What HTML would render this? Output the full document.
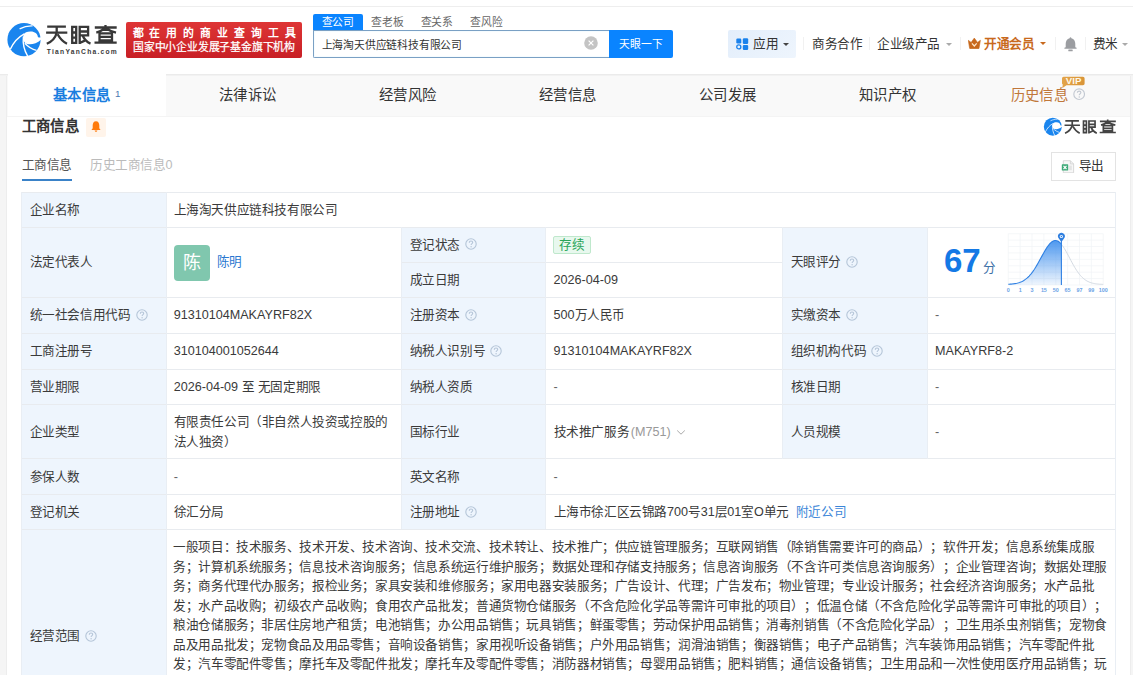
<!DOCTYPE html>
<html lang="zh-CN"><head><meta charset="utf-8"><style>
html,body{margin:0;padding:0;width:1133px;height:675px;overflow:hidden;background:#fff;font-family:'Liberation Sans', sans-serif;}
.a{position:absolute;white-space:nowrap;text-spacing-trim:space-all;}
</style></head><body>
<div class="a" style="left:0px;top:0px;width:1133px;height:73px;background:#fff;"></div><div class="a" style="left:0px;top:6px;width:1133px;height:1px;background:#eeeeee;"></div><svg class="a" style="left:4px;top:20px" width="40" height="40" viewBox="0 0 40 40"><circle cx="20" cy="19.7" r="16.6" fill="#1a85ee"/>
<path d="M33.9 17 C 33.6 13.6, 30.8 11.6, 26.8 11.5 C 23.2 11.4, 20.6 12.6, 19.6 14.5 C 18.8 17.5, 19.3 21, 21 23 C 24 25, 31.5 25, 37.2 19.4 L 37.6 17.6 C 36.2 17.3, 34.8 17.8, 33.9 17 Z" fill="#fff"/>
<path d="M15.6 8.9 C 19.5 6.9, 24.5 5.8, 28.6 6.0" fill="none" stroke="#fff" stroke-width="1.2"/>
<path d="M6.3 29.2 C 9.5 22.5, 14.5 17, 20.3 13.9" fill="none" stroke="#fff" stroke-width="1.4"/>
<path d="M19.4 16.5 C 18.6 23.5, 20.5 31, 23.9 36.6" fill="none" stroke="#fff" stroke-width="1.4"/>
<path d="M20.8 23.3 C 24 26.8, 28.5 29.5, 32.5 30.3" fill="none" stroke="#fff" stroke-width="1.3"/></svg><svg class="a" style="left:44px;top:20px" width="80" height="38" viewBox="0 0 80 38"><g fill="none" stroke="#383838" stroke-width="2.3">
<path d="M3.2 6.7 H21.9 M2.1 12.7 H23.3 M12.7 6.7 V12.7 M12.7 12.7 C 11.5 17.5, 8 21.5, 2.8 23.7 M13.6 14.2 C 16 18.5, 19.5 22, 23 23.7"/>
<path d="M28.2 6.9 H32.2 V22.8 H28.2 Z M28.2 12.5 H32.2 M28.2 17.6 H32.2"/>
<path d="M35.7 5.8 V23.9 M35.7 6.9 H44.1 V15.3 H35.7 M35.7 11.5 H44.1 M38.5 15.3 C 40 19, 42.5 22, 46.5 23.6 M35.7 23.0 L 40.8 20.6"/>
<path d="M50.8 7.5 H72.7 M61.5 4.9 V11 M61.2 8.3 C 58.5 10.2, 55.5 11.7, 52.3 12.6 M61.8 8.3 C 64.5 10.2, 68 11.7, 72 12.6 M55.5 13.3 H68 V20.4 H55.5 Z M55.5 16.9 H68 M50.5 22.7 H72.7"/>
</g>
<text x="2.8" y="33.9" font-family="Liberation Sans" font-weight="bold" font-size="6.7" fill="#3a3a3a" textLength="70" lengthAdjust="spacing">TianYanCha.com</text></svg><div class="a" style="left:126px;top:22px;width:176px;height:35.5px;background:linear-gradient(#de3535,#c81f25);border-radius:2px;"></div><div class="a" style="left:132.5px;top:24px;font-size:10.8px;line-height:18px;color:#fff;font-weight:bold;"><span style="letter-spacing:5.95px">都在用的商业查询工具</span></div><div class="a" style="left:133px;top:38.2px;font-size:10.8px;line-height:18px;color:#fff;-webkit-text-stroke:0.25px #fff;"><span style="letter-spacing:-0.20px">国家中小企业发展子基金旗下机构</span></div><div class="a" style="left:313px;top:14px;width:49.5px;height:16.5px;background:#0a84ff;border-radius:2px 2px 0 0;"></div><div class="a" style="left:313px;top:14px;font-size:10.8px;line-height:16px;color:#fff;width:49.5px;text-align:center;"><span style="letter-spacing:-0.20px">查公司</span></div><div class="a" style="left:371px;top:14px;font-size:10.8px;line-height:16px;color:#666;"><span style="letter-spacing:-0.20px">查老板</span></div><div class="a" style="left:420.5px;top:14px;font-size:10.8px;line-height:16px;color:#666;"><span style="letter-spacing:-0.20px">查关系</span></div><div class="a" style="left:470px;top:14px;font-size:10.8px;line-height:16px;color:#666;"><span style="letter-spacing:-0.20px">查风险</span></div><div class="a" style="left:313px;top:30px;width:296px;height:26px;border:1px solid #7aa0c4;border-right:none;background:#fff;border-radius:0 0 0 2px;box-shadow:inset 0 0 1.5px #cdeeff"></div><div class="a" style="left:321.5px;top:35.5px;font-size:10.8px;line-height:18px;color:#333;"><span style="letter-spacing:-0.20px">上海淘天供应链科技有限公司</span></div><svg class="a" style="left:584px;top:36px" width="14" height="14" viewBox="0 0 14 14"><circle cx="7" cy="7" r="6.8" fill="#c4c4c4"/><path d="M4.6 4.6 L9.4 9.4 M9.4 4.6 L4.6 9.4" stroke="#fff" stroke-width="1.2"/></svg><div class="a" style="left:608.5px;top:30px;width:64.5px;height:27.5px;background:#0a84ff;border-radius:0 2px 2px 0;"></div><div class="a" style="left:608.5px;top:34.5px;font-size:10.8px;line-height:18px;color:#fff;width:64.5px;text-align:center;"><span style="letter-spacing:-0.20px">天眼一下</span></div><div class="a" style="left:728px;top:30px;width:67.5px;height:27.5px;background:linear-gradient(135deg,#e3eefb,#eef5fd);border-radius:2px;"></div><svg class="a" style="left:736px;top:38px" width="13" height="12.5" viewBox="0 0 13 12.5">
<rect x="0.3" y="0.5" width="5" height="5" rx="1.2" fill="#1a82ec"/><rect x="6.8" y="0.3" width="5.4" height="5.6" rx="1.2" fill="#1a82ec"/>
<circle cx="2.8" cy="8.9" r="2.05" fill="none" stroke="#1a82ec" stroke-width="1.3"/><rect x="6.8" y="6.9" width="5.4" height="5" rx="1.2" fill="#1a82ec"/></svg><div class="a" style="left:753px;top:35px;font-size:12.6px;line-height:18px;color:#333;"><span style="letter-spacing:-0.40px">应用</span></div><div class="a" style="left:782.5px;top:42.5px;width:0;height:0;border-left:3px solid transparent;border-right:3px solid transparent;border-top:3.5px solid #444"></div><div class="a" style="left:803px;top:37px;width:1px;height:13px;background:#f1f1f1;"></div><div class="a" style="left:812px;top:35px;font-size:12.6px;line-height:18px;color:#333;"><span style="letter-spacing:-0.40px">商务合作</span></div><div class="a" style="left:869px;top:37px;width:1px;height:13px;background:#f1f1f1;"></div><div class="a" style="left:877px;top:35px;font-size:12.6px;line-height:18px;color:#333;"><span style="letter-spacing:-0.40px">企业级产品</span></div><div class="a" style="left:945.5px;top:42.5px;width:0;height:0;border-left:3px solid transparent;border-right:3px solid transparent;border-top:3.5px solid #aaa"></div><div class="a" style="left:960px;top:37px;width:1px;height:13px;background:#f1f1f1;"></div><svg class="a" style="left:968px;top:38px" width="13" height="11" viewBox="0 0 13 11">
<path d="M0.3 2.3 L3.1 4.4 L6.3 0.1 L9.5 4.4 L12.4 2.3 L11 10.3 Q10.8 10.8 10.2 10.8 L2.4 10.8 Q1.8 10.8 1.6 10.3 Z" fill="#c8691d" stroke="#c8691d" stroke-width="0.6" stroke-linejoin="round"/><path d="M3.9 5.4 L6.3 8.0 L8.7 5.4" fill="none" stroke="#ffe9cc" stroke-width="1.2"/></svg><div class="a" style="left:984.3px;top:35px;font-size:12.6px;line-height:18px;color:#c8691d;font-weight:bold;"><span style="letter-spacing:-0.40px">开通会员</span></div><div class="a" style="left:1040px;top:42px;width:0;height:0;border-left:3px solid transparent;border-right:3px solid transparent;border-top:3.5px solid #c8691d"></div><div class="a" style="left:1055px;top:37px;width:1px;height:13px;background:#f1f1f1;"></div><svg class="a" style="left:1063.5px;top:36.5px" width="13" height="15" viewBox="0 0 13 15">
<path d="M6.5 0.3 C 7 0.3 7.3 0.8 7.4 1.2 C 10 1.8 11.3 4.2 11.3 6.8 L11.3 10.2 L12.6 10.8 L12.6 11.8 L0.4 11.8 L0.4 10.8 L1.7 10.2 L1.7 6.8 C 1.7 4.2 3 1.8 5.6 1.2 C 5.7 0.8 6 0.3 6.5 0.3 Z" fill="#9b9da1"/>
<rect x="4.3" y="12.4" width="4.4" height="1.9" rx="0.5" fill="#9b9da1"/></svg><div class="a" style="left:1084.5px;top:37px;width:1.0px;height:13px;background:#f1f1f1;"></div><div class="a" style="left:1092.5px;top:35px;font-size:12.6px;line-height:18px;color:#333;"><span style="letter-spacing:-0.40px">费米</span></div><div class="a" style="left:1121.5px;top:42.5px;width:0;height:0;border-left:3px solid transparent;border-right:3px solid transparent;border-top:3.5px solid #aaa"></div><div class="a" style="left:0px;top:74px;width:1133px;height:601px;background:#f5f5f5;"></div><div class="a" style="left:6px;top:74px;width:1125px;height:601px;background:#ededed;"></div><div class="a" style="left:7px;top:74px;width:1123px;height:601px;background:#fff;"></div><div class="a" style="left:7px;top:74px;width:1123px;height:42px;background:#f9f9f9;"></div><div class="a" style="left:7px;top:115.5px;width:1123px;height:1.0px;background:#f4f4f4;"></div><div class="a" style="left:0px;top:73.5px;width:1133px;height:1.0px;background:#ebebeb;"></div><div class="a" style="left:0px;top:74.5px;width:1133px;height:1.0px;background:#f2f2f2;"></div><div class="a" style="left:8px;top:74px;width:158px;height:42px;background:#fff;"></div><div class="a" style="left:53px;top:84.5px;font-size:14.4px;line-height:20px;color:#1a7ee0;font-weight:bold;"><span style="letter-spacing:0.40px">基本信息</span></div><div class="a" style="left:115px;top:83.5px;font-size:9.8px;line-height:20px;color:#4a78b0;">1</div><div class="a" style="left:219px;top:84.7px;font-size:14.4px;line-height:20px;color:#333;"><span style="letter-spacing:0.40px">法律诉讼</span></div><div class="a" style="left:379px;top:84.7px;font-size:14.4px;line-height:20px;color:#333;"><span style="letter-spacing:0.40px">经营风险</span></div><div class="a" style="left:539px;top:84.7px;font-size:14.4px;line-height:20px;color:#333;"><span style="letter-spacing:0.40px">经营信息</span></div><div class="a" style="left:699px;top:84.7px;font-size:14.4px;line-height:20px;color:#333;"><span style="letter-spacing:0.40px">公司发展</span></div><div class="a" style="left:859px;top:84.7px;font-size:14.4px;line-height:20px;color:#333;"><span style="letter-spacing:0.40px">知识产权</span></div><div class="a" style="left:1010.5px;top:84.7px;font-size:14.4px;line-height:20px;color:#c0773a;"><span style="letter-spacing:0.40px">历史信息</span></div><svg class="a" style="left:1061px;top:75.5px" width="24.5" height="12.5" viewBox="0 0 24.5 12.5">
<defs><linearGradient id="vg" x1="0" y1="0" x2="1" y2="0"><stop offset="0" stop-color="#e3a449"/><stop offset="1" stop-color="#d99538"/></linearGradient></defs>
<path d="M2.6 0.8 L22 0.8 Q23.6 0.8 23.6 2.4 L23.6 7.6 Q23.6 9.2 22 9.2 L5.5 9.2 L1.2 12.2 L1.8 8.6 Q1 8.2 1 7.2 L1 2.4 Q1 0.8 2.6 0.8 Z" fill="url(#vg)"/>
<text x="12.6" y="8" font-family="Liberation Sans" font-weight="bold" font-size="8.4" fill="#fff8e8" text-anchor="middle" textLength="15.5" lengthAdjust="spacingAndGlyphs">VIP</text></svg><svg class="a" style="left:1073px;top:88.3px" width="12.3" height="12.3" viewBox="0 0 12 12"><circle cx="6" cy="6" r="5.2" fill="none" stroke="#c3c9d2" stroke-width="1.1"/><path d="M4.3 4.7 C 4.3 3.6 5.1 3.0 6 3.0 C 6.9 3.0 7.7 3.6 7.7 4.5 C 7.7 5.6 6.1 5.6 6.1 7.0" fill="none" stroke="#c3c9d2" stroke-width="1.1"/><circle cx="6.1" cy="8.7" r="0.7" fill="#c3c9d2"/></svg><div class="a" style="left:21.5px;top:116px;font-size:14.4px;line-height:20px;color:#333;font-weight:bold;"><span style="letter-spacing:0.40px">工商信息</span></div><div class="a" style="left:86px;top:117.5px;width:19.5px;height:19.0px;background:#fff4ea;border-radius:2px;"></div><svg class="a" style="left:91px;top:121px" width="10" height="11" viewBox="0 0 10 11">
<path d="M5 0.3 C 7.3 0.3 8.3 2.3 8.3 4.6 L8.3 7.3 L9.6 8.9 L0.4 8.9 L1.7 7.3 L1.7 4.6 C 1.7 2.3 2.7 0.3 5 0.3 Z" fill="#ff7a0a"/><path d="M3.6 9.5 L6.4 9.5 C 6.2 10.4 5.6 10.8 5 10.8 C 4.4 10.8 3.8 10.4 3.6 9.5 Z" fill="#ff7a0a"/></svg><svg class="a" style="left:1042.2px;top:116px" width="21.7" height="21.7" viewBox="0 0 40 40"><circle cx="20" cy="19.7" r="16.6" fill="#1a85ee"/>
<path d="M33.9 17 C 33.6 13.6, 30.8 11.6, 26.8 11.5 C 23.2 11.4, 20.6 12.6, 19.6 14.5 C 18.8 17.5, 19.3 21, 21 23 C 24 25, 31.5 25, 37.2 19.4 L 37.6 17.6 C 36.2 17.3, 34.8 17.8, 33.9 17 Z" fill="#fff"/>
<path d="M15.6 8.9 C 19.5 6.9, 24.5 5.8, 28.6 6.0" fill="none" stroke="#fff" stroke-width="1.2"/>
<path d="M6.3 29.2 C 9.5 22.5, 14.5 17, 20.3 13.9" fill="none" stroke="#fff" stroke-width="1.4"/>
<path d="M19.4 16.5 C 18.6 23.5, 20.5 31, 23.9 36.6" fill="none" stroke="#fff" stroke-width="1.4"/>
<path d="M20.8 23.3 C 24 26.8, 28.5 29.5, 32.5 30.3" fill="none" stroke="#fff" stroke-width="1.3"/></svg><svg class="a" style="left:1062.9px;top:116.4px" width="58" height="20" viewBox="0 0 79.8 27.5"><g fill="none" stroke="#444" stroke-width="2.3">
<path d="M3.2 6.7 H21.9 M2.1 12.7 H23.3 M12.7 6.7 V12.7 M12.7 12.7 C 11.5 17.5, 8 21.5, 2.8 23.7 M13.6 14.2 C 16 18.5, 19.5 22, 23 23.7"/>
<path d="M28.2 6.9 H32.2 V22.8 H28.2 Z M28.2 12.5 H32.2 M28.2 17.6 H32.2"/>
<path d="M35.7 5.8 V23.9 M35.7 6.9 H44.1 V15.3 H35.7 M35.7 11.5 H44.1 M38.5 15.3 C 40 19, 42.5 22, 46.5 23.6 M35.7 23.0 L 40.8 20.6"/>
<path d="M50.8 7.5 H72.7 M61.5 4.9 V11 M61.2 8.3 C 58.5 10.2, 55.5 11.7, 52.3 12.6 M61.8 8.3 C 64.5 10.2, 68 11.7, 72 12.6 M55.5 13.3 H68 V20.4 H55.5 Z M55.5 16.9 H68 M50.5 22.7 H72.7"/>
</g>
</svg><div class="a" style="left:21.5px;top:155px;font-size:12.6px;line-height:20px;color:#555;"><span style="letter-spacing:-0.40px">工商信息</span></div><div class="a" style="left:21.5px;top:179px;width:50.5px;height:2px;background:#3a82c8;"></div><div class="a" style="left:90px;top:155px;font-size:12.6px;line-height:20px;color:#bbb;"><span style="letter-spacing:-0.40px">历史工商信息</span>0</div><div class="a" style="left:1050.5px;top:152px;width:63px;height:26.5px;border:1px solid #e3e3e3;background:#fff"></div><svg class="a" style="left:1061px;top:159.5px" width="13.5" height="13.5" viewBox="0 0 13.5 13.5">
<path d="M2.3 0.7 L9.4 0.7 L12.6 3.9 L12.6 12.8 L2.3 12.8 Z" fill="#f7f7f7" stroke="#d5d5d5" stroke-width="0.9"/>
<path d="M9.4 0.7 L9.4 3.9 L12.6 3.9" fill="none" stroke="#d5d5d5" stroke-width="0.9"/>
<rect x="8.2" y="5.6" width="2.6" height="4.6" fill="#e3e3e3"/>
<rect x="0.8" y="4.3" width="6.4" height="6.3" rx="0.6" fill="#3eaa78"/><path d="M2.5 5.9 L5.5 9 M5.5 5.9 L2.5 9" stroke="#fff" stroke-width="1.1"/></svg><div class="a" style="left:1078.5px;top:156px;font-size:12.6px;line-height:20px;color:#333;"><span style="letter-spacing:-0.40px">导出</span></div><div class="a" style="left:21.5px;top:192.4px;width:145.2px;height:34.79999999999998px;background:#eef5fd;"></div><div class="a" style="left:21.5px;top:227.2px;width:145.2px;height:35.5px;background:#eef5fd;"></div><div class="a" style="left:21.5px;top:262.7px;width:145.2px;height:34.80000000000001px;background:#eef5fd;"></div><div class="a" style="left:21.5px;top:297.5px;width:145.2px;height:35.80000000000001px;background:#eef5fd;"></div><div class="a" style="left:21.5px;top:333.3px;width:145.2px;height:36.0px;background:#eef5fd;"></div><div class="a" style="left:21.5px;top:369.3px;width:145.2px;height:35.5px;background:#eef5fd;"></div><div class="a" style="left:21.5px;top:404.8px;width:145.2px;height:53.89999999999998px;background:#eef5fd;"></div><div class="a" style="left:21.5px;top:458.7px;width:145.2px;height:36.0px;background:#eef5fd;"></div><div class="a" style="left:21.5px;top:494.7px;width:145.2px;height:34.599999999999966px;background:#eef5fd;"></div><div class="a" style="left:21.5px;top:529.3px;width:145.2px;height:170.70000000000005px;background:#eef5fd;"></div><div class="a" style="left:401px;top:227.2px;width:144.60000000000002px;height:70.30000000000001px;background:#eef5fd;"></div><div class="a" style="left:401px;top:297.5px;width:144.60000000000002px;height:35.80000000000001px;background:#eef5fd;"></div><div class="a" style="left:401px;top:333.3px;width:144.60000000000002px;height:36.0px;background:#eef5fd;"></div><div class="a" style="left:401px;top:369.3px;width:144.60000000000002px;height:35.5px;background:#eef5fd;"></div><div class="a" style="left:401px;top:404.8px;width:144.60000000000002px;height:53.89999999999998px;background:#eef5fd;"></div><div class="a" style="left:401px;top:458.7px;width:144.60000000000002px;height:36.0px;background:#eef5fd;"></div><div class="a" style="left:401px;top:494.7px;width:144.60000000000002px;height:34.599999999999966px;background:#eef5fd;"></div><div class="a" style="left:782.2px;top:227.2px;width:145.19999999999993px;height:70.30000000000001px;background:#eef5fd;"></div><div class="a" style="left:782.2px;top:297.5px;width:145.19999999999993px;height:35.80000000000001px;background:#eef5fd;"></div><div class="a" style="left:782.2px;top:333.3px;width:145.19999999999993px;height:36.0px;background:#eef5fd;"></div><div class="a" style="left:782.2px;top:369.3px;width:145.19999999999993px;height:35.5px;background:#eef5fd;"></div><div class="a" style="left:782.2px;top:404.8px;width:145.19999999999993px;height:53.89999999999998px;background:#eef5fd;"></div><div class="a" style="left:21.5px;top:191.9px;width:1093.9px;height:1.0px;background:#e8ebef;"></div><div class="a" style="left:21.5px;top:226.7px;width:1093.9px;height:1.0px;background:#e8ebef;"></div><div class="a" style="left:401px;top:262.2px;width:381.20000000000005px;height:1.0px;background:#e8ebef;"></div><div class="a" style="left:21.5px;top:297.0px;width:1093.9px;height:1.0px;background:#e8ebef;"></div><div class="a" style="left:21.5px;top:332.8px;width:1093.9px;height:1.0px;background:#e8ebef;"></div><div class="a" style="left:21.5px;top:368.8px;width:1093.9px;height:1.0px;background:#e8ebef;"></div><div class="a" style="left:21.5px;top:404.3px;width:1093.9px;height:1.0px;background:#e8ebef;"></div><div class="a" style="left:21.5px;top:458.2px;width:1093.9px;height:1.0px;background:#e8ebef;"></div><div class="a" style="left:21.5px;top:494.2px;width:1093.9px;height:1.0px;background:#e8ebef;"></div><div class="a" style="left:21.5px;top:528.8px;width:1093.9px;height:1.0px;background:#e8ebef;"></div><div class="a" style="left:21.0px;top:192.4px;width:1.0px;height:482.6px;background:#e9eef4;"></div><div class="a" style="left:1114.9px;top:192.4px;width:1.0px;height:482.6px;background:#e9eef4;"></div><div class="a" style="left:166.2px;top:192.4px;width:1.0px;height:482.6px;background:#e9eef4;"></div><div class="a" style="left:400.5px;top:227.2px;width:1.0px;height:302.09999999999997px;background:#e9eef4;"></div><div class="a" style="left:545.1px;top:227.2px;width:1.0px;height:302.09999999999997px;background:#e9eef4;"></div><div class="a" style="left:781.7px;top:227.2px;width:1.0px;height:231.5px;background:#e9eef4;"></div><div class="a" style="left:926.9px;top:227.2px;width:1.0px;height:231.5px;background:#e9eef4;"></div><div class="a" style="left:29.7px;top:199.60000000000002px;font-size:12.6px;line-height:20px;color:#3a3a3a;"><span style="letter-spacing:-0.40px">企业名称</span></div><div class="a" style="left:173.7px;top:199.60000000000002px;font-size:12.6px;line-height:20px;color:#3a3a3a;"><span style="letter-spacing:-0.40px">上海淘天供应链科技有限公司</span></div><div class="a" style="left:29.7px;top:252.15000000000003px;font-size:12.6px;line-height:20px;color:#3a3a3a;"><span style="letter-spacing:-0.40px">法定代表人</span></div><div class="a" style="left:173.8px;top:244.7px;width:35.79999999999998px;height:36.30000000000001px;background:#80c7ae;border-radius:4px;"></div><div class="a" style="left:173.8px;top:251px;font-size:18px;line-height:24px;color:#fff;width:35.8px;text-align:center;">陈</div><div class="a" style="left:216.5px;top:252px;font-size:12.6px;line-height:20px;color:#2b78d0;"><span style="letter-spacing:-0.40px">陈明</span></div><div class="a" style="left:409.5px;top:234.75px;font-size:12.6px;line-height:20px;color:#3a3a3a;"><span style="letter-spacing:-0.40px">登记状态</span></div><svg class="a" style="left:464.5px;top:238.45px" width="12" height="12" viewBox="0 0 12 12"><circle cx="6" cy="6" r="5.2" fill="none" stroke="#b5c5d8" stroke-width="1.1"/><path d="M4.3 4.7 C 4.3 3.6 5.1 3.0 6 3.0 C 6.9 3.0 7.7 3.6 7.7 4.5 C 7.7 5.6 6.1 5.6 6.1 7.0" fill="none" stroke="#b5c5d8" stroke-width="1.1"/><circle cx="6.1" cy="8.7" r="0.7" fill="#b5c5d8"/></svg><div class="a" style="left:553px;top:235.5px;width:35.5px;height:16.5px;border:1px solid #bfe8cc;background:#e8f8ee;border-radius:2px"></div><div class="a" style="left:553px;top:235.3px;font-size:12.6px;line-height:20px;color:#2aa55a;width:37.5px;text-align:center;"><span style="letter-spacing:-0.40px">存续</span></div><div class="a" style="left:409.5px;top:269.90000000000003px;font-size:12.6px;line-height:20px;color:#3a3a3a;"><span style="letter-spacing:-0.40px">成立日期</span></div><div class="a" style="left:553.6px;top:269.90000000000003px;font-size:12.6px;line-height:20px;color:#3a3a3a;">2026-04-09</div><div class="a" style="left:790.5px;top:252.15000000000003px;font-size:12.6px;line-height:20px;color:#3a3a3a;"><span style="letter-spacing:-0.40px">天眼评分</span></div><svg class="a" style="left:845.5px;top:255.85000000000002px" width="12" height="12" viewBox="0 0 12 12"><circle cx="6" cy="6" r="5.2" fill="none" stroke="#b5c5d8" stroke-width="1.1"/><path d="M4.3 4.7 C 4.3 3.6 5.1 3.0 6 3.0 C 6.9 3.0 7.7 3.6 7.7 4.5 C 7.7 5.6 6.1 5.6 6.1 7.0" fill="none" stroke="#b5c5d8" stroke-width="1.1"/><circle cx="6.1" cy="8.7" r="0.7" fill="#b5c5d8"/></svg><div class="a" style="left:944px;top:240.5px;font-size:33px;line-height:40px;color:#1479e5;font-weight:bold;">67</div><div class="a" style="left:982.5px;top:258.3px;font-size:12.6px;line-height:20px;color:#3f72a8;"><span style="letter-spacing:-0.40px">分</span></div><svg class="a" style="left:1000px;top:228px" width="110" height="70" viewBox="1000 228 110 70"><defs><linearGradient id="cg" x1="0" y1="0" x2="0" y2="1"><stop offset="0" stop-color="#3b8ded" stop-opacity="0.9"/><stop offset="1" stop-color="#3b8ded" stop-opacity="0.08"/></linearGradient></defs><line x1="1008.30" y1="233.7" x2="1008.30" y2="285.0" stroke="#f0f3f7" stroke-width="0.7"/><line x1="1020.16" y1="233.7" x2="1020.16" y2="285.0" stroke="#f0f3f7" stroke-width="0.7"/><line x1="1032.03" y1="233.7" x2="1032.03" y2="285.0" stroke="#f0f3f7" stroke-width="0.7"/><line x1="1043.89" y1="233.7" x2="1043.89" y2="285.0" stroke="#f0f3f7" stroke-width="0.7"/><line x1="1055.75" y1="233.7" x2="1055.75" y2="285.0" stroke="#f0f3f7" stroke-width="0.7"/><line x1="1067.61" y1="233.7" x2="1067.61" y2="285.0" stroke="#f0f3f7" stroke-width="0.7"/><line x1="1079.47" y1="233.7" x2="1079.47" y2="285.0" stroke="#f0f3f7" stroke-width="0.7"/><line x1="1091.34" y1="233.7" x2="1091.34" y2="285.0" stroke="#f0f3f7" stroke-width="0.7"/><line x1="1103.20" y1="233.7" x2="1103.20" y2="285.0" stroke="#f0f3f7" stroke-width="0.7"/><line x1="1008.3" y1="233.70" x2="1103.2" y2="233.70" stroke="#f0f3f7" stroke-width="0.7"/><line x1="1008.3" y1="240.11" x2="1103.2" y2="240.11" stroke="#f0f3f7" stroke-width="0.7"/><line x1="1008.3" y1="246.52" x2="1103.2" y2="246.52" stroke="#f0f3f7" stroke-width="0.7"/><line x1="1008.3" y1="252.94" x2="1103.2" y2="252.94" stroke="#f0f3f7" stroke-width="0.7"/><line x1="1008.3" y1="259.35" x2="1103.2" y2="259.35" stroke="#f0f3f7" stroke-width="0.7"/><line x1="1008.3" y1="265.76" x2="1103.2" y2="265.76" stroke="#f0f3f7" stroke-width="0.7"/><line x1="1008.3" y1="272.18" x2="1103.2" y2="272.18" stroke="#f0f3f7" stroke-width="0.7"/><line x1="1008.3" y1="278.59" x2="1103.2" y2="278.59" stroke="#f0f3f7" stroke-width="0.7"/><line x1="1008.3" y1="285.00" x2="1103.2" y2="285.00" stroke="#f0f3f7" stroke-width="0.7"/><path d="M1008.30 284.28 L1009.25 284.23 L1010.20 284.17 L1011.15 284.09 L1012.10 284.00 L1013.04 283.89 L1013.99 283.77 L1014.94 283.62 L1015.89 283.45 L1016.84 283.24 L1017.79 283.00 L1018.74 282.73 L1019.69 282.42 L1020.64 282.06 L1021.59 281.65 L1022.53 281.18 L1023.48 280.66 L1024.43 280.07 L1025.38 279.41 L1026.33 278.68 L1027.28 277.88 L1028.23 277.00 L1029.18 276.03 L1030.13 274.98 L1031.08 273.85 L1032.03 272.63 L1032.97 271.34 L1033.92 269.96 L1034.87 268.51 L1035.82 266.98 L1036.77 265.40 L1037.72 263.75 L1038.67 262.07 L1039.62 260.35 L1040.57 258.61 L1041.51 256.87 L1042.46 255.13 L1043.41 253.41 L1044.36 251.74 L1045.31 250.13 L1046.26 248.59 L1047.21 247.14 L1048.16 245.79 L1049.11 244.58 L1050.06 243.49 L1051.00 242.56 L1051.95 241.80 L1052.90 241.20 L1053.85 240.78 L1054.80 240.55 L1055.75 240.51 L1056.70 240.66 L1057.65 241.01 L1058.60 241.56 L1059.55 242.30 L1060.50 243.21 L1061.40 244.24 L1061.4 285.0 L1008.3 285.0 Z" fill="url(#cg)"/><path d="M1008.30 284.28 L1009.25 284.23 L1010.20 284.17 L1011.15 284.09 L1012.10 284.00 L1013.04 283.89 L1013.99 283.77 L1014.94 283.62 L1015.89 283.45 L1016.84 283.24 L1017.79 283.00 L1018.74 282.73 L1019.69 282.42 L1020.64 282.06 L1021.59 281.65 L1022.53 281.18 L1023.48 280.66 L1024.43 280.07 L1025.38 279.41 L1026.33 278.68 L1027.28 277.88 L1028.23 277.00 L1029.18 276.03 L1030.13 274.98 L1031.08 273.85 L1032.03 272.63 L1032.97 271.34 L1033.92 269.96 L1034.87 268.51 L1035.82 266.98 L1036.77 265.40 L1037.72 263.75 L1038.67 262.07 L1039.62 260.35 L1040.57 258.61 L1041.51 256.87 L1042.46 255.13 L1043.41 253.41 L1044.36 251.74 L1045.31 250.13 L1046.26 248.59 L1047.21 247.14 L1048.16 245.79 L1049.11 244.58 L1050.06 243.49 L1051.00 242.56 L1051.95 241.80 L1052.90 241.20 L1053.85 240.78 L1054.80 240.55 L1055.75 240.51 L1056.70 240.66 L1057.65 241.01 L1058.60 241.56 L1059.55 242.30 L1060.50 243.21 L1061.40 244.24" fill="none" stroke="#2f80e3" stroke-width="1.1"/><path d="M1061.40 244.24 L1061.44 244.29 L1062.39 245.52 L1063.34 246.89 L1064.29 248.37 L1065.24 249.96 L1066.19 251.62 L1067.14 253.35 L1068.09 255.13 L1069.04 256.93 L1069.98 258.74 L1070.93 260.54 L1071.88 262.31 L1072.83 264.05 L1073.78 265.74 L1074.73 267.37 L1075.68 268.93 L1076.63 270.41 L1077.58 271.81 L1078.53 273.12 L1079.47 274.35 L1080.42 275.48 L1081.37 276.52 L1082.32 277.48 L1083.27 278.35 L1084.22 279.13 L1085.17 279.84 L1086.12 280.47 L1087.07 281.04 L1088.02 281.53 L1088.97 281.97 L1089.91 282.36 L1090.86 282.69 L1091.81 282.98 L1092.76 283.23 L1093.71 283.44 L1094.66 283.62 L1095.61 283.77 L1096.56 283.90 L1097.51 284.01 L1098.45 284.10 L1099.40 284.18 L1100.35 284.24 L1101.30 284.29 L1102.25 284.33 L1103.20 284.37" fill="none" stroke="#cfd6df" stroke-width="0.9"/><line x1="1061.4" y1="240" x2="1061.4" y2="285.0" stroke="#2f80e3" stroke-width="1.1"/><path d="M1061.4 242 L1058.8000000000002 238.5 A3.4 3.4 0 1 1 1064.0 238.5 Z" fill="#2f7fe0"/><circle cx="1061.4" cy="236.5" r="1.6" fill="#fff"/><circle cx="1061.4" cy="236.5" r="0.8" fill="#2f7fe0"/><text x="1008.30" y="292.3" font-family="Liberation Sans" font-size="5.4" font-weight="bold" fill="#6aa3e6" text-anchor="middle">0</text><text x="1020.16" y="292.3" font-family="Liberation Sans" font-size="5.4" font-weight="bold" fill="#6aa3e6" text-anchor="middle">1</text><text x="1032.03" y="292.3" font-family="Liberation Sans" font-size="5.4" font-weight="bold" fill="#6aa3e6" text-anchor="middle">3</text><text x="1043.89" y="292.3" font-family="Liberation Sans" font-size="5.4" font-weight="bold" fill="#6aa3e6" text-anchor="middle">15</text><text x="1055.75" y="292.3" font-family="Liberation Sans" font-size="5.4" font-weight="bold" fill="#6aa3e6" text-anchor="middle">50</text><text x="1067.61" y="292.3" font-family="Liberation Sans" font-size="5.4" font-weight="bold" fill="#6aa3e6" text-anchor="middle">65</text><text x="1079.47" y="292.3" font-family="Liberation Sans" font-size="5.4" font-weight="bold" fill="#6aa3e6" text-anchor="middle">97</text><text x="1091.34" y="292.3" font-family="Liberation Sans" font-size="5.4" font-weight="bold" fill="#6aa3e6" text-anchor="middle">99</text><text x="1103.20" y="292.3" font-family="Liberation Sans" font-size="5.4" font-weight="bold" fill="#6aa3e6" text-anchor="middle">100</text></svg><div class="a" style="left:29.7px;top:305.2px;font-size:12.6px;line-height:20px;color:#3a3a3a;"><span style="letter-spacing:-0.40px">统一社会信用代码</span></div><svg class="a" style="left:135.5px;top:308.9px" width="12" height="12" viewBox="0 0 12 12"><circle cx="6" cy="6" r="5.2" fill="none" stroke="#b5c5d8" stroke-width="1.1"/><path d="M4.3 4.7 C 4.3 3.6 5.1 3.0 6 3.0 C 6.9 3.0 7.7 3.6 7.7 4.5 C 7.7 5.6 6.1 5.6 6.1 7.0" fill="none" stroke="#b5c5d8" stroke-width="1.1"/><circle cx="6.1" cy="8.7" r="0.7" fill="#b5c5d8"/></svg><div class="a" style="left:173.7px;top:305.2px;font-size:12.6px;line-height:20px;color:#3a3a3a;">91310104MAKAYRF82X</div><div class="a" style="left:409.5px;top:305.2px;font-size:12.6px;line-height:20px;color:#3a3a3a;"><span style="letter-spacing:-0.40px">注册资本</span></div><svg class="a" style="left:464.9px;top:308.9px" width="12" height="12" viewBox="0 0 12 12"><circle cx="6" cy="6" r="5.2" fill="none" stroke="#b5c5d8" stroke-width="1.1"/><path d="M4.3 4.7 C 4.3 3.6 5.1 3.0 6 3.0 C 6.9 3.0 7.7 3.6 7.7 4.5 C 7.7 5.6 6.1 5.6 6.1 7.0" fill="none" stroke="#b5c5d8" stroke-width="1.1"/><circle cx="6.1" cy="8.7" r="0.7" fill="#b5c5d8"/></svg><div class="a" style="left:553.6px;top:305.2px;font-size:12.6px;line-height:20px;color:#3a3a3a;">500<span style="letter-spacing:-0.40px">万人民币</span></div><div class="a" style="left:790.5px;top:305.2px;font-size:12.6px;line-height:20px;color:#3a3a3a;"><span style="letter-spacing:-0.40px">实缴资本</span></div><svg class="a" style="left:845.9px;top:308.9px" width="12" height="12" viewBox="0 0 12 12"><circle cx="6" cy="6" r="5.2" fill="none" stroke="#b5c5d8" stroke-width="1.1"/><path d="M4.3 4.7 C 4.3 3.6 5.1 3.0 6 3.0 C 6.9 3.0 7.7 3.6 7.7 4.5 C 7.7 5.6 6.1 5.6 6.1 7.0" fill="none" stroke="#b5c5d8" stroke-width="1.1"/><circle cx="6.1" cy="8.7" r="0.7" fill="#b5c5d8"/></svg><div class="a" style="left:935px;top:305.2px;font-size:12.6px;line-height:20px;color:#666;">-</div><div class="a" style="left:29.7px;top:341.1px;font-size:12.6px;line-height:20px;color:#3a3a3a;"><span style="letter-spacing:-0.40px">工商注册号</span></div><div class="a" style="left:173.7px;top:341.1px;font-size:12.6px;line-height:20px;color:#3a3a3a;">310104001052644</div><div class="a" style="left:409.5px;top:341.1px;font-size:12.6px;line-height:20px;color:#3a3a3a;"><span style="letter-spacing:-0.40px">纳税人识别号</span></div><svg class="a" style="left:490.1px;top:344.8px" width="12" height="12" viewBox="0 0 12 12"><circle cx="6" cy="6" r="5.2" fill="none" stroke="#b5c5d8" stroke-width="1.1"/><path d="M4.3 4.7 C 4.3 3.6 5.1 3.0 6 3.0 C 6.9 3.0 7.7 3.6 7.7 4.5 C 7.7 5.6 6.1 5.6 6.1 7.0" fill="none" stroke="#b5c5d8" stroke-width="1.1"/><circle cx="6.1" cy="8.7" r="0.7" fill="#b5c5d8"/></svg><div class="a" style="left:553.6px;top:341.1px;font-size:12.6px;line-height:20px;color:#3a3a3a;">91310104MAKAYRF82X</div><div class="a" style="left:790.5px;top:341.1px;font-size:12.6px;line-height:20px;color:#3a3a3a;"><span style="letter-spacing:-0.40px">组织机构代码</span></div><svg class="a" style="left:871.1px;top:344.8px" width="12" height="12" viewBox="0 0 12 12"><circle cx="6" cy="6" r="5.2" fill="none" stroke="#b5c5d8" stroke-width="1.1"/><path d="M4.3 4.7 C 4.3 3.6 5.1 3.0 6 3.0 C 6.9 3.0 7.7 3.6 7.7 4.5 C 7.7 5.6 6.1 5.6 6.1 7.0" fill="none" stroke="#b5c5d8" stroke-width="1.1"/><circle cx="6.1" cy="8.7" r="0.7" fill="#b5c5d8"/></svg><div class="a" style="left:935px;top:341.1px;font-size:12.6px;line-height:20px;color:#3a3a3a;">MAKAYRF8-2</div><div class="a" style="left:29.7px;top:376.85px;font-size:12.6px;line-height:20px;color:#3a3a3a;"><span style="letter-spacing:-0.40px">营业期限</span></div><div class="a" style="left:173.7px;top:376.85px;font-size:12.6px;line-height:20px;color:#3a3a3a;">2026-04-09 <span style="letter-spacing:-0.40px">至</span> <span style="letter-spacing:-0.40px">无固定期限</span></div><div class="a" style="left:409.5px;top:376.85px;font-size:12.6px;line-height:20px;color:#3a3a3a;"><span style="letter-spacing:-0.40px">纳税人资质</span></div><div class="a" style="left:553.6px;top:376.85px;font-size:12.6px;line-height:20px;color:#666;">-</div><div class="a" style="left:790.5px;top:376.85px;font-size:12.6px;line-height:20px;color:#3a3a3a;"><span style="letter-spacing:-0.40px">核准日期</span></div><div class="a" style="left:935px;top:376.85px;font-size:12.6px;line-height:20px;color:#666;">-</div><div class="a" style="left:29.7px;top:421.55px;font-size:12.6px;line-height:20px;color:#3a3a3a;"><span style="letter-spacing:-0.40px">企业类型</span></div><div class="a" style="left:173.7px;top:411.8px;font-size:12.6px;line-height:20px;color:#3a3a3a;width:222px;"><span style="letter-spacing:-0.40px">有限责任公司（非自然人投资或控股的</span><br><span style="letter-spacing:-0.40px">法人独资）</span></div><div class="a" style="left:409.5px;top:421.55px;font-size:12.6px;line-height:20px;color:#3a3a3a;"><span style="letter-spacing:-0.40px">国标行业</span></div><div class="a" style="left:553.6px;top:421.55px;font-size:12.6px;line-height:20px;color:#3a3a3a;"><span style="letter-spacing:-0.40px">技术推广服务</span><span style="color:#999;margin-left:1.5px">(M751)</span></div><svg class="a" style="left:676px;top:428.5px" width="10" height="7" viewBox="0 0 10 7"><path d="M1.2 1.5 L5 5.2 L8.8 1.5" fill="none" stroke="#aaa" stroke-width="1"/></svg><div class="a" style="left:790.5px;top:421.55px;font-size:12.6px;line-height:20px;color:#3a3a3a;"><span style="letter-spacing:-0.40px">人员规模</span></div><div class="a" style="left:935px;top:421.55px;font-size:12.6px;line-height:20px;color:#666;">-</div><div class="a" style="left:29.7px;top:466.5px;font-size:12.6px;line-height:20px;color:#3a3a3a;"><span style="letter-spacing:-0.40px">参保人数</span></div><div class="a" style="left:173.7px;top:466.5px;font-size:12.6px;line-height:20px;color:#666;">-</div><div class="a" style="left:409.5px;top:466.5px;font-size:12.6px;line-height:20px;color:#3a3a3a;"><span style="letter-spacing:-0.40px">英文名称</span></div><div class="a" style="left:553.6px;top:466.5px;font-size:12.6px;line-height:20px;color:#666;">-</div><div class="a" style="left:29.7px;top:501.8px;font-size:12.6px;line-height:20px;color:#3a3a3a;"><span style="letter-spacing:-0.40px">登记机关</span></div><div class="a" style="left:173.7px;top:501.8px;font-size:12.6px;line-height:20px;color:#3a3a3a;"><span style="letter-spacing:-0.40px">徐汇分局</span></div><div class="a" style="left:409.5px;top:501.8px;font-size:12.6px;line-height:20px;color:#3a3a3a;"><span style="letter-spacing:-0.40px">注册地址</span></div><svg class="a" style="left:464.9px;top:505.5px" width="12" height="12" viewBox="0 0 12 12"><circle cx="6" cy="6" r="5.2" fill="none" stroke="#b5c5d8" stroke-width="1.1"/><path d="M4.3 4.7 C 4.3 3.6 5.1 3.0 6 3.0 C 6.9 3.0 7.7 3.6 7.7 4.5 C 7.7 5.6 6.1 5.6 6.1 7.0" fill="none" stroke="#b5c5d8" stroke-width="1.1"/><circle cx="6.1" cy="8.7" r="0.7" fill="#b5c5d8"/></svg><div class="a" style="left:553.6px;top:501.8px;font-size:12.6px;line-height:20px;color:#3a3a3a;"><span style="letter-spacing:-0.40px">上海市徐汇区云锦路</span>700<span style="letter-spacing:-0.40px">号</span>31<span style="letter-spacing:-0.40px">层</span>01<span style="letter-spacing:-0.40px">室</span>O<span style="letter-spacing:-0.40px">单元</span> <span style="color:#3b86d8;margin-left:3.5px"><span style="letter-spacing:-0.40px">附近公司</span></span></div><div class="a" style="left:29.7px;top:626.4499999999999px;font-size:12.6px;line-height:20px;color:#3a3a3a;"><span style="letter-spacing:-0.40px">经营范围</span></div><svg class="a" style="left:85.1px;top:630.15px" width="12" height="12" viewBox="0 0 12 12"><circle cx="6" cy="6" r="5.2" fill="none" stroke="#b5c5d8" stroke-width="1.1"/><path d="M4.3 4.7 C 4.3 3.6 5.1 3.0 6 3.0 C 6.9 3.0 7.7 3.6 7.7 4.5 C 7.7 5.6 6.1 5.6 6.1 7.0" fill="none" stroke="#b5c5d8" stroke-width="1.1"/><circle cx="6.1" cy="8.7" r="0.7" fill="#b5c5d8"/></svg><div class="a" style="left:173.1px;top:538.4px;font-size:12.6px;line-height:19.47px;color:#3a3a3a;white-space:nowrap;"><span style="letter-spacing:-0.38px">一般项目：技术服务、技术开发、技术咨询、技术交流、技术转让、技术推广；供应链管理服务；互联网销售（除销售需要许可的商品）；软件开发；信息系统集成服</span></div><div class="a" style="left:173.1px;top:557.87px;font-size:12.6px;line-height:19.47px;color:#3a3a3a;white-space:nowrap;"><span style="letter-spacing:-0.38px">务；计算机系统服务；信息技术咨询服务；信息系统运行维护服务；数据处理和存储支持服务；信息咨询服务（不含许可类信息咨询服务）；企业管理咨询；数据处理服</span></div><div class="a" style="left:173.1px;top:577.3399999999999px;font-size:12.6px;line-height:19.47px;color:#3a3a3a;white-space:nowrap;"><span style="letter-spacing:-0.38px">务；商务代理代办服务；报检业务；家具安装和维修服务；家用电器安装服务；广告设计、代理；广告发布；物业管理；专业设计服务；社会经济咨询服务；水产品批</span></div><div class="a" style="left:173.1px;top:596.81px;font-size:12.6px;line-height:19.47px;color:#3a3a3a;white-space:nowrap;"><span style="letter-spacing:-0.38px">发；水产品收购；初级农产品收购；食用农产品批发；普通货物仓储服务（不含危险化学品等需许可审批的项目）；低温仓储（不含危险化学品等需许可审批的项目）；</span></div><div class="a" style="left:173.1px;top:616.28px;font-size:12.6px;line-height:19.47px;color:#3a3a3a;white-space:nowrap;"><span style="letter-spacing:-0.38px">粮油仓储服务；非居住房地产租赁；电池销售；办公用品销售；玩具销售；鲜蛋零售；劳动保护用品销售；消毒剂销售（不含危险化学品）；卫生用杀虫剂销售；宠物食</span></div><div class="a" style="left:173.1px;top:635.75px;font-size:12.6px;line-height:19.47px;color:#3a3a3a;white-space:nowrap;"><span style="letter-spacing:-0.38px">品及用品批发；宠物食品及用品零售；音响设备销售；家用视听设备销售；户外用品销售；润滑油销售；衡器销售；电子产品销售；汽车装饰用品销售；汽车零配件批</span></div><div class="a" style="left:173.1px;top:655.22px;font-size:12.6px;line-height:19.47px;color:#3a3a3a;white-space:nowrap;"><span style="letter-spacing:-0.38px">发；汽车零配件零售；摩托车及零配件批发；摩托车及零配件零售；消防器材销售；母婴用品销售；肥料销售；通信设备销售；卫生用品和一次性使用医疗用品销售；玩</span></div><div class="a" style="left:173.1px;top:674.6899999999999px;font-size:12.6px;line-height:19.47px;color:#3a3a3a;white-space:nowrap;"><span style="letter-spacing:-0.38px">具销售；</span></div>
</body></html>
